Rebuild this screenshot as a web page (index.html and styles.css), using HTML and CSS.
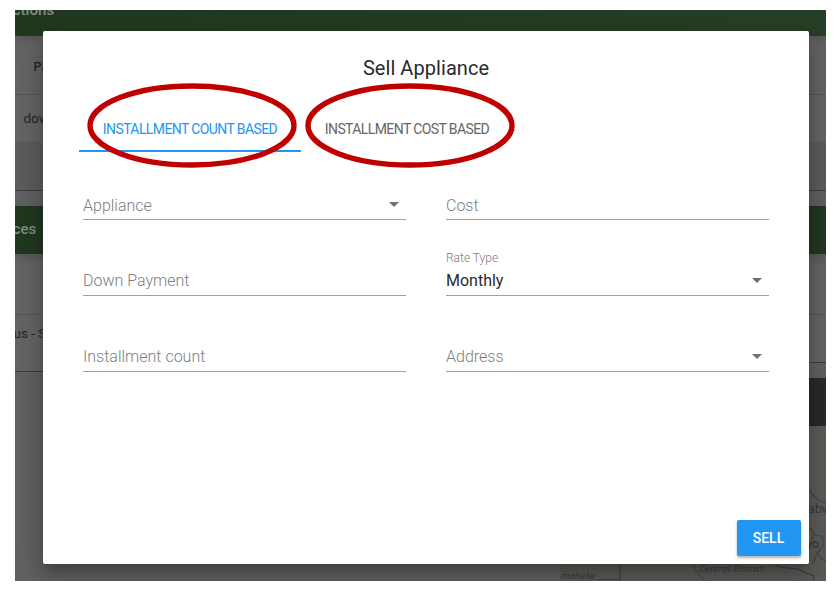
FILE: index.html
```html
<!DOCTYPE html>
<html lang="en">
<head>
<meta charset="utf-8">
<title>Sell Appliance</title>
<link rel="stylesheet" href="styles.css">
</head>
<body>
<main class="screen">
  <div class="page">
    <section class="card">
      <h2 class="card-header card-header-cut"><span>ctions</span></h2>
      <div class="row row-head"><span>Pa</span></div>
      <div class="row row-item"><span>dow</span></div>
      <div class="row row-foot"></div>
    </section>
    <div class="columns">
      <section class="card card-services">
        <h2 class="card-header"><span>ces</span></h2>
        <div class="row row-space"></div>
        <div class="row row-status"><span>us - S</span></div>
      </section>
      <div class="column-right">
        <section class="card card-side">
          <h2 class="card-header"></h2>
          <div class="row row-space"></div>
          <div class="row row-side"></div>
        </section>
        <section class="map-card">
          <div class="map-header"></div>
          <svg class="map" viewBox="0 0 266 155" width="266" height="155">
            <g fill="none" stroke="#453b48" stroke-width="1.2">
              <path d="M37 153.500H60V136"/>
              <path d="M213 136L219 141L228 142L238 143L246 147L254 150L253 155"/>
              <path d="M249 64L255 71L260 75L266 77" stroke="#484648"/>
              <path d="M249 101L254 107L252 114M255 109L262 110L264 119L257 127L253 138M257 127L263 134L266 135" stroke="#484648"/>
              <path d="M131 136L139 149L145 155" stroke="#484847"/>
            </g>
            <text class="map-small" x="1" y="153">maheke</text>
            <text class="map-small" x="139" y="146">Central District</text>
            <text class="map-place" x="248" y="87">abw</text>
            <text class="map-city" x="246" y="122">yo</text>
          </svg>
        </section>
      </div>
    </div>
  </div>

  <div class="dialog" role="dialog" aria-labelledby="title">
    <h1 class="title" id="title">Sell Appliance</h1>
    <nav class="tabs">
      <button class="tab tab-active"><span>INSTALLMENT COUNT BASED</span>
        <svg class="ring" viewBox="0 0 210 84" width="210" height="84"><ellipse cx="105" cy="41.500" rx="102" ry="39.500"/></svg>
      </button>
      <button class="tab tab-cost"><span>INSTALLMENT COST BASED</span>
        <svg class="ring" viewBox="0 0 210 84" width="210" height="84"><ellipse cx="105" cy="41.500" rx="102" ry="39.500"/></svg>
      </button>
    </nav>
    <form class="fields">
      <div class="field"><span class="label">Appliance</span><i class="arrow"></i></div>
      <div class="field"><span class="label">Cost</span></div>
      <div class="field field-up"><span class="label">Down Payment</span></div>
      <div class="field field-up"><span class="float-label">Rate Type</span><span class="value">Monthly</span><i class="arrow"></i></div>
      <div class="field field-up"><span class="label">Installment count</span></div>
      <div class="field field-up"><span class="label">Address</span><i class="arrow"></i></div>
    </form>
    <footer class="actions"><button class="sell">SELL</button></footer>
  </div>
</main>
</body>
</html>
```
FILE: styles.css
```css
* { box-sizing: border-box; }
body {
  margin: 0;
  padding: 9.5px 9px 20px 14.5px;
  height: 601px;
  overflow: hidden;
  background: #fff;
  font-family: Roboto, sans-serif;
}
h1, h2 { margin: 0; font-weight: 400; }
button { border: 0; font-family: inherit; }
.screen {
  position: relative;
  height: 571.5px;
  overflow: hidden;
  background: #616161;
}
.page { display: flex; flex-direction: column; height: 100%; }
.card { border-bottom: 1.5px solid #3c3c3c; background: #646464; }
.card-header {
  display: flex;
  align-items: center;
  height: 48px;
  background: #213820;
  box-shadow: 0 4px 8px rgba(0, 0, 0, .15);
  color: #838c83;
  font-size: 15px;
  font-weight: 500;
  letter-spacing: .1px;
}
.card-header-cut {
  height: 26px;
  background: linear-gradient(90deg, #203820, #263f26);
  align-items: flex-start;
  overflow: hidden;
}
.card-header-cut span { margin: -9px 0 0 -2px; }
.card-services .card-header span { margin: -2px 0 0 -2px; }
.row { color: #252525; font-size: 13.5px; white-space: nowrap; }
.row-head { height: 59.5px; padding: 23px 0 0 19px; border-bottom: 1px solid #555; font-size: 12.5px; font-weight: 500; }
.row-item { height: 47px; padding: 15px 0 0 9px; }
.row-foot { height: 48px; background: #5c5c5c; }
.columns { display: flex; flex: 1; padding-top: 14.5px; }
.card-services { width: 545px; height: 166px; }
.column-right { width: 266.5px; }
.card-side { height: 157.5px; }
.row-space { height: 61px; border-bottom: 1px solid #555; }
.row-status { height: 56px; padding-top: 10px; }
.row-status span { margin-left: -1px; }
.row-side { height: 46px; }
.map-card { padding-top: 15px; }
.map-header { height: 48px; background: #29292b; }
.map { display: block; background: #5c5b57; }
.map text { fill: #3d3540; font-family: "Noto Sans", sans-serif; }
.map .map-small { font-size: 9.8px; font-style: italic; }
.map .map-place { font-size: 12px; }
.map .map-city { font-size: 12px; fill: #303030; }

.dialog {
  position: absolute;
  left: 28.5px;
  top: 21.5px;
  width: 766px;
  height: 532.5px;
  padding: 0 36px;
  display: flex;
  flex-direction: column;
  border-radius: 2px;
  background: #fff;
  box-shadow: 0 7px 9px -4px rgba(0, 0, 0, .2), 0 14px 21px 2px rgba(0, 0, 0, .14), 0 5px 26px 4px rgba(0, 0, 0, .12);
}
.title {
  padding-top: 25px;
  height: 73px;
  color: #2a2a2a;
  font-size: 20px;
  line-height: 25px;
  letter-spacing: .06px;
  text-align: center;
}
.tabs { display: flex; height: 48px; }
.tab {
  position: relative;
  width: 222px;
  height: 48px;
  padding: 3px 0 0;
  border-bottom: 2px solid transparent;
  background: none;
  color: #666;
  font-size: 14px;
  letter-spacing: -.6px;
  white-space: nowrap;
}
.tab-cost { width: 212px; }
.tab-active { border-bottom-color: #2196f3; color: #2196f3; }
.ring { position: absolute; left: 8px; top: -20px; overflow: visible; }
.tab-cost .ring { left: 4px; }
.ring ellipse { fill: none; stroke: #c00000; stroke-width: 5.4; }
.fields {
  display: grid;
  grid-template-columns: 323px 323px;
  grid-auto-rows: 48px;
  gap: 28px 40px;
  padding: 19.5px 0 0 4px;
}
.field {
  position: relative;
  height: 48px;
  padding-top: 23px;
  border-bottom: 1px solid #a0a0a0;
  line-height: 22px;
  font-size: 16px;
}
.field-up { padding-top: 22px; }
.label { color: #7d7d7d; font-weight: 300; }
.value { color: #2a2a2a; }
.float-label {
  position: absolute;
  left: 0;
  top: 3px;
  color: #7d7d7d;
  font-size: 12px;
  font-weight: 300;
  line-height: 15px;
}
.arrow {
  position: absolute;
  right: 7px;
  top: 30.5px;
  border: 5px solid transparent;
  border-top-color: #707070;
  border-bottom: 0;
}
.field-up .arrow { top: 30px; }
.actions { margin: auto -27.5px 8px 0; text-align: right; }
.sell {
  width: 64px;
  height: 36px;
  padding: 0;
  border-radius: 2px;
  background: #2196f3;
  box-shadow: 0 2px 3px rgba(0, 0, 0, .3);
  color: #fff;
  font-size: 14px;
  font-weight: 500;
}
```
